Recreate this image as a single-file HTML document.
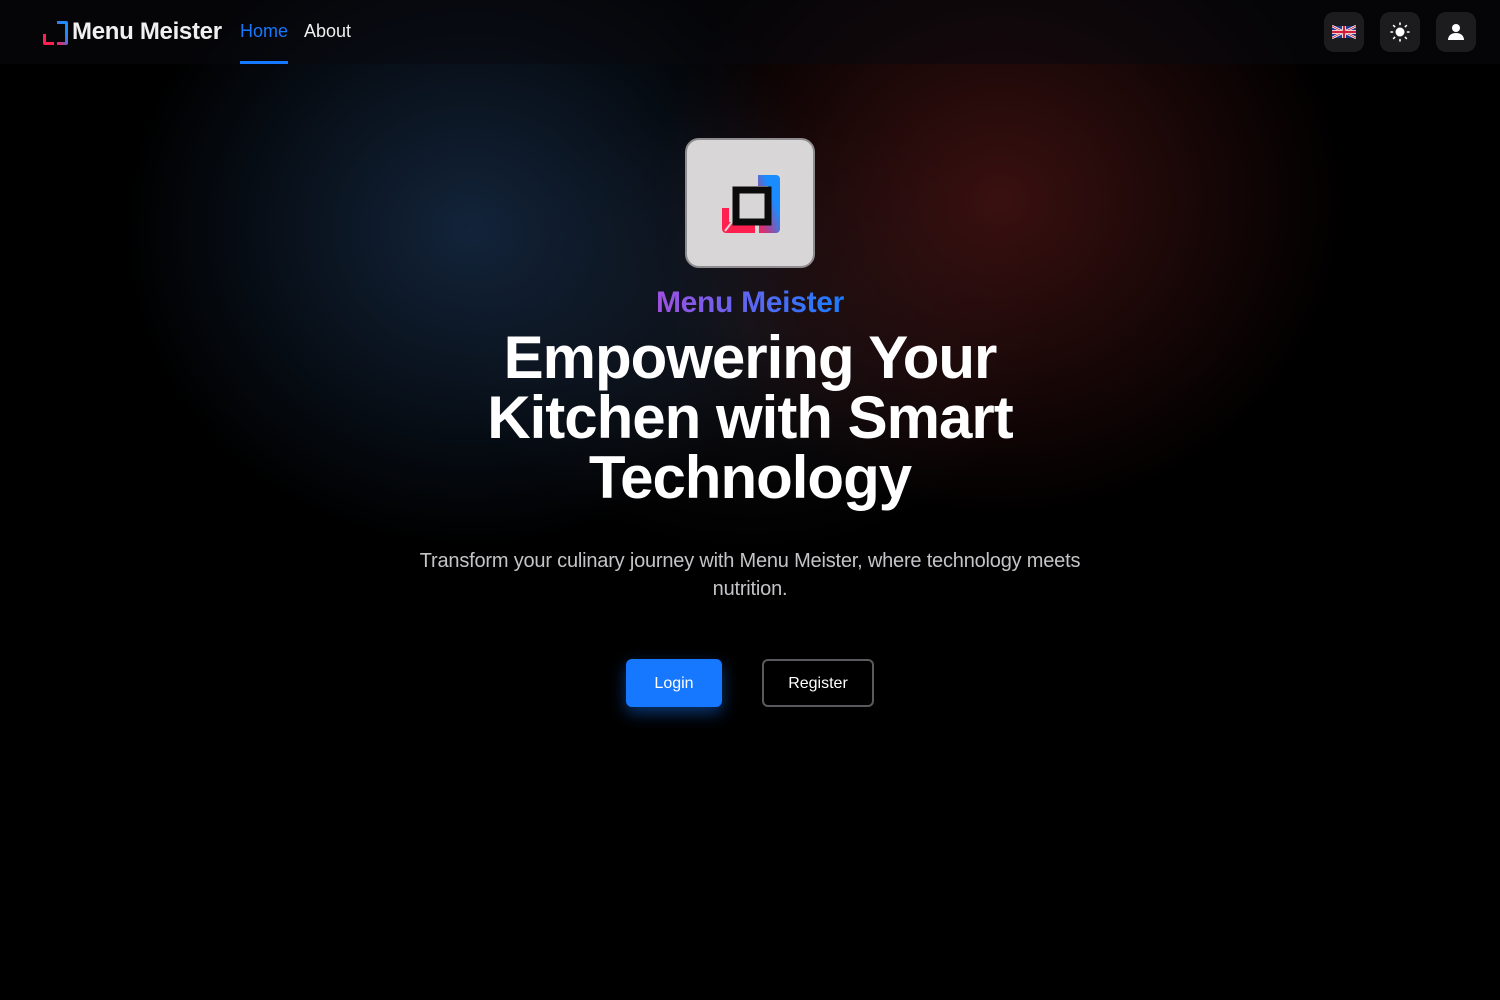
<!DOCTYPE html>
<html><head><meta charset="utf-8"><style>
*{margin:0;padding:0;box-sizing:border-box}
body{width:1500px;height:1000px;overflow:hidden;background:#000;font-family:"Liberation Sans",sans-serif;color:#fff;position:relative}
.bg{position:absolute;inset:0;background:
radial-gradient(ellipse 480px 440px at 470px 230px,rgba(22,42,68,.85),rgba(0,0,0,0) 72%),
radial-gradient(ellipse 480px 440px at 1000px 200px,rgba(72,20,20,.8),rgba(0,0,0,0) 72%),
radial-gradient(ellipse 420px 320px at 750px 330px,rgba(22,22,28,.7),rgba(0,0,0,0) 70%);}
nav{position:absolute;left:0;top:0;width:1500px;height:64px;background:rgba(10,10,14,.55)}
.brand{position:absolute;left:42px;top:18px;display:flex;align-items:center}
.brand span{font-weight:bold;font-size:24px;letter-spacing:-.3px;color:#f0f0f0;margin-left:3px}
.nl{position:absolute;top:21px;font-size:18px}
.ul{position:absolute;left:240px;top:61px;width:48px;height:3px;background:#1677ff}
.ib{position:absolute;top:12px;width:40px;height:40px;border-radius:10px;background:#1c1c1e;display:flex;align-items:center;justify-content:center}
.logo{position:absolute;left:685px;top:138px;width:130px;height:130px;border-radius:14px;background:#d8d6d7;border:2px solid #8e8c8e}
.t{position:absolute;width:1500px;text-align:center;left:0}
h1{font-size:60px;line-height:60px;font-weight:bold;letter-spacing:-1px}
.btn{position:absolute;top:659px;height:48px;border-radius:6px;font-size:16px;display:flex;align-items:center;justify-content:center;padding-top:2px}
</style></head><body>
<div class="bg"></div>
<nav>
<div class="brand"><svg width="27" height="27" viewBox="0 0 27 27"><defs><linearGradient id="g" x1="1" y1="0" x2="0" y2="1"><stop offset=".35" stop-color="#1a8cff"/><stop offset=".7" stop-color="#b04090"/><stop offset="1" stop-color="#ff2050"/></linearGradient></defs><path d="M15 2H24a2 2 0 0 1 2 2V24a2 2 0 0 1-2 2H15V23H23V5H15Z" fill="url(#g)"/><path d="M1 15H4V23H12V26H3a2 2 0 0 1-2-2Z" fill="#ff2050"/></svg><span>Menu Meister</span></div>
<div class="nl" style="left:240px;color:#1677ff">Home</div>
<div class="nl" style="left:304px;color:#f0f0f0">About</div>
<div class="ul"></div>
<div class="ib" style="left:1324px"><svg width="24" height="14" viewBox="0 0 60 30"><rect width="60" height="30" fill="#1f3b8c"/><path d="M0 0L60 30M60 0L0 30" stroke="#fff" stroke-width="6"/><path d="M0 0L60 30M60 0L0 30" stroke="#d0203a" stroke-width="2"/><path d="M30 0V30M0 15H60" stroke="#fff" stroke-width="10"/><path d="M30 0V30M0 15H60" stroke="#d0203a" stroke-width="6"/></svg></div>
<div class="ib" style="left:1380px"><svg width="20" height="20" viewBox="0 0 20 20"><circle cx="10" cy="10" r="4.5" fill="#fff"/><g stroke="#fff" stroke-width="1.6" stroke-linecap="round"><path d="M10 1v1.5M10 17.5V19M1 10h1.5M17.5 10H19M3.6 3.6l1 1M15.4 15.4l1 1M3.6 16.4l1-1M15.4 4.6l1-1"/></g></svg></div>
<div class="ib" style="left:1436px"><svg width="18" height="18" viewBox="0 0 18 18" fill="#fff"><circle cx="9" cy="5" r="4"/><path d="M1 17c0-4 3-7 8-7s8 3 8 7Z"/></svg></div>
</nav>
<div class="logo"><svg width="130" height="130" viewBox="0 0 130 130" style="position:absolute;left:-2px;top:-2px"><defs><linearGradient id="g2" x1="1" y1="0" x2="0" y2="1"><stop offset=".35" stop-color="#1a8cff"/><stop offset=".75" stop-color="#b04090"/><stop offset="1" stop-color="#ff2050"/></linearGradient></defs><path d="M73 37H91a4 4 0 0 1 4 4V91a4 4 0 0 1-4 4H74V84H83V48H73Z" fill="url(#g2)"/><path d="M37 70H44V84H70V95H41a4 4 0 0 1-4-4Z" fill="#ff2050"/><path d="M47 84L40 93" stroke="#d8d6d7" stroke-width="2"/><rect x="48" y="49" width="38" height="38" fill="#d8d6d7"/><rect x="51" y="52" width="32" height="32" fill="none" stroke="#0b0b0b" stroke-width="7"/></svg></div>
<div class="t" style="top:286px;font-size:30px;font-weight:bold;letter-spacing:-.3px"><span style="background:linear-gradient(90deg,#a050e0,#1a7cff);-webkit-background-clip:text;color:transparent">Menu Meister</span></div>
<h1 class="t" style="top:328px">Empowering Your<br>Kitchen with Smart<br>Technology</h1>
<div class="t" style="top:547px;font-size:20px;line-height:28px;color:#c4c4c8;letter-spacing:-.2px">Transform your culinary journey with Menu Meister, where technology meets<br>nutrition.</div>
<div class="btn" style="left:626px;width:96px;background:#1677ff;box-shadow:0 6px 16px rgba(22,119,255,.45)">Login</div>
<div class="btn" style="left:762px;width:112px;border:2px solid #5a5a5e">Register</div>
</body></html>
